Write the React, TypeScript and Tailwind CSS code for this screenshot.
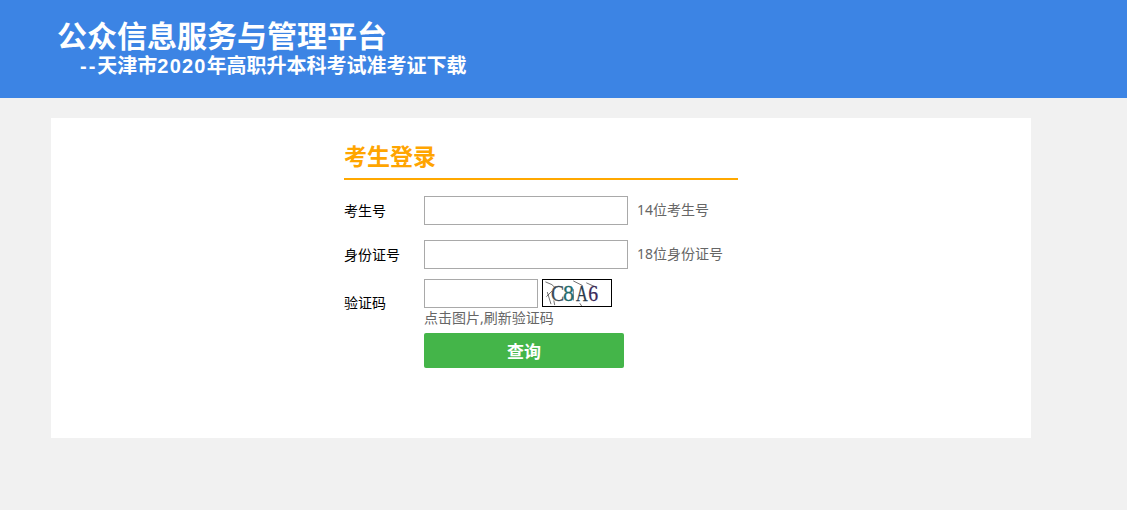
import React from 'react';

const font = "font-['Noto_Sans','Noto_Sans_CJK_SC',sans-serif]";
const headerFont = "font-['Liberation_Sans','Noto_Sans_CJK_SC',sans-serif]";

const Captcha = () => (
  <svg width="70" height="28" viewBox="0 0 70 28" className="block border border-black bg-white box-border">
    <g stroke="#222" strokeWidth="0.7" fill="none">
      <path d="M1 2 L8 5 L12 9" />
      <path d="M3 13 L7 26 M8 12 L2 18 M10 22 L11 27" />
      <path d="M31 1 L41 6 M45 3 L56 8 M31 10 L31 22 M38 25 L40 28" />
    </g>
    <g fontFamily="'Liberation Serif',serif" fontSize="25" stroke="currentColor" strokeWidth="0.3">
      <text transform="translate(7 23) scale(.85 1)" fill="#3a4a55" className="text-[#3a4a55]">C</text>
      <text transform="translate(20 23) scale(.95 1)" fill="#1f6b6b" className="text-[#1f6b6b]">8</text>
      <text transform="translate(34 23) scale(.7 1)" fill="#2a3a4a" className="text-[#2a3a4a]">A</text>
      <text transform="translate(47 23) scale(.85 1)" fill="#3a2a5a" className="text-[#3a2a5a]">6</text>
    </g>
  </svg>
);

export default function App() {
  return (
    <div className={`min-h-[510px] bg-[#f1f1f1] ${font}`}>
      <header className={`h-[98px] bg-[#3c84e4] pl-[57px] pt-[20px] text-white font-bold ${headerFont}`}>
        <h1 className="text-[30px] leading-[34px]">公众信息服务与管理平台</h1>
        <h2 className="pl-[23px] text-[20px] leading-[24px]">
          <span className="tracking-[2px]">--</span>天津市<span className="tracking-[1.2px]">2020</span>年高职升本科考试准考证下载
        </h2>
      </header>

      <main className="ml-[51px] mt-[20px] w-[980px] h-[320px] bg-white pl-[293px] pt-[24px]">
        <div className="w-[394px] border-b-2 border-[#ffa800] h-[38px]">
          <h3 className="text-[23px] leading-[28px] font-bold text-[#ffa500]">考生登录</h3>
        </div>

        <div className="mt-[16px] flex items-center h-[29px]">
          <label className="w-[80px] text-[14px] text-black">考生号</label>
          <input className="w-[204px] h-[29px] border border-[#a9a9a9] bg-white" />
          <span className="ml-[9px] pb-[2px] text-[14px] text-[#666]">14位考生号</span>
        </div>

        <div className="mt-[15px] flex items-center h-[29px]">
          <label className="w-[80px] text-[14px] text-black">身份证号</label>
          <input className="w-[204px] h-[29px] border border-[#a9a9a9] bg-white" />
          <span className="ml-[9px] pb-[2px] text-[14px] text-[#666]">18位身份证号</span>
        </div>

        <div className="mt-[10px] flex">
          <label className="w-[80px] pt-[14px] text-[14px] leading-[20px] text-black">验证码</label>
          <div>
            <div className="flex gap-[4px] items-start">
              <input className="w-[114px] h-[29px] border border-[#a9a9a9] bg-white" />
              <Captcha />
            </div>
            <p className="text-[14px] leading-[20px] text-[#666]">点击图片,刷新验证码</p>
            <button className="mt-[5px] block w-[200px] h-[35px] pt-[3px] rounded-[2px] bg-[#44b549] text-white text-[17px] font-bold">查询</button>
          </div>
        </div>
      </main>
    </div>
  );
}
